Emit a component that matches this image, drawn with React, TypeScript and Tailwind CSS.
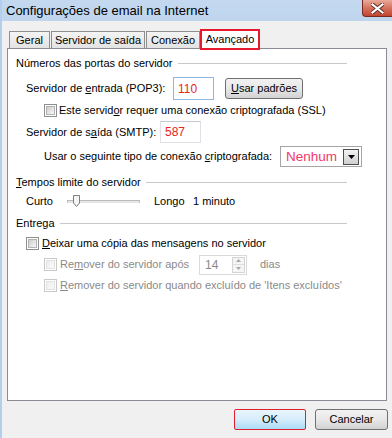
import React from "react";

function Check({ disabled }: { disabled?: boolean }) {
  return (
    <span
      className={`flex h-[13px] w-[13px] shrink-0 items-center justify-center border ${
        disabled ? "border-[#c9c9c9] bg-white" : "border-[#8e8f8f] bg-white"
      }`}
    >
      <span
        className={`h-[9px] w-[9px] border ${
          disabled
            ? "border-[#e2e2e2] bg-gradient-to-br from-[#ededed] to-[#fbfbfb]"
            : "border-[#b3b3b3] bg-gradient-to-br from-[#cdcdcd] to-[#f7f7f7]"
        }`}
      />
    </span>
  );
}

function Header({ children, top = 0 }: { children: React.ReactNode; top?: number }) {
  return (
    <div className={`flex items-center pr-[39px] ${top ? "h-[20px]" : "h-[28px]"}`}>
      <span>{children}</span>
      <span className="ml-[5px] h-px flex-1 bg-[#c6cacd]" />
    </div>
  );
}

function Tab({ label, w, selected }: { label: string; w: string; selected?: boolean }) {
  if (selected) {
    return (
      <div
        className={`relative z-10 -mb-[2px] flex h-[21px] ${w} items-center justify-center border-2 border-[#e8192c] bg-white`}
      >
        {label}
      </div>
    );
  }
  return (
    <div
      className={`flex h-[17px] ${w} items-center justify-center border border-b-0 border-[#8e8f8f] bg-gradient-to-b from-[#f4f4f4] to-[#e3e3e3] pt-[1px]`}
    >
      {label}
    </div>
  );
}

export default function App() {
  return (
    <div
      className="flex h-[438px] w-[392px] flex-col overflow-hidden border-l-2 border-[#b4cfee] bg-[#f0f0f0] text-[11px] text-black"
      style={{ fontFamily: '"Liberation Sans", Arial, sans-serif' }}
    >
      {/* title bar */}
      <div className="flex h-[21px] items-start justify-between bg-gradient-to-b from-[#c4d9f0] to-[#bed5ed]">
        <span className="pl-[4px] pt-[3px] text-[13px] leading-[15px] text-black">
          Configurações de email na Internet
        </span>
        <div className="flex h-[17px] w-[30px] items-center justify-center rounded-bl-[4px] border border-r-0 border-t-0 border-[#7a2a1e] bg-gradient-to-b from-[#e9a99a] via-[#d3725e] to-[#c0442c]">
          <svg width="13" height="11" viewBox="0 0 13 11">
            <path
              d="M1.5 1.5 L11.5 9.5 M11.5 1.5 L1.5 9.5"
              stroke="#5a2a22"
              strokeWidth="4"
              strokeLinecap="square"
            />
            <path
              d="M1.5 1.5 L11.5 9.5 M11.5 1.5 L1.5 9.5"
              stroke="#ffffff"
              strokeWidth="2.2"
              strokeLinecap="square"
            />
          </svg>
        </div>
      </div>

      {/* tabs */}
      <div className="flex h-[27px] items-end pl-[7px]">
        <Tab label="Geral" w="w-[41px]" />
        <div className="w-px" />
        <Tab label="Servidor de saída" w="w-[94px]" />
        <div className="w-px" />
        <Tab label="Conexão" w="w-[54px]" />
        <Tab label="Avançado" w="w-[60px]" selected />
      </div>

      {/* panel */}
      <div className="ml-[5px] flex h-[353px] w-[380px] flex-col border border-[#898c95] bg-white pl-[8px]">
        <Header>Números das portas do servidor</Header>

        <div className="flex h-[23px] items-center">
          <span className="ml-[10px] w-[147px]">
            Servidor de <u>e</u>ntrada (POP3):
          </span>
          <div className="flex h-[23px] w-[41px] items-center border border-[#8fb6e3] pl-[4px] text-[12px] text-[#e8241c]">
            110
          </div>
          <button className="ml-[11px] flex h-[21px] w-[78px] items-center justify-center rounded-[3px] border border-[#707070] bg-gradient-to-b from-[#f2f2f2] via-[#e8e8e8] to-[#d2d2d2]">
            <span>
              <u>U</u>sar padrões
            </span>
          </button>
        </div>

        <div className="flex h-[21px] items-center">
          <span className="ml-[28px]">
            <Check />
          </span>
          <span className="ml-[2px]">
            Este servid<u>o</u>r requer uma conexão criptografada (SSL)
          </span>
        </div>

        <div className="flex h-[22px] items-center">
          <span className="ml-[10px] w-[134px]">
            Servidor de s<u>a</u>ída (SMTP):
          </span>
          <div className="flex h-[22px] w-[41px] items-center border border-[#dfe1e6] border-t-[#c5c8ce] pl-[4px] text-[12px] text-[#e8241c]">
            587
          </div>
        </div>

        <div className="mt-[3px] flex h-[21px] items-center">
          <span className="ml-[28px] w-[236px]">
            Usar o seguinte tipo de conexão <u>c</u>riptografada:
          </span>
          <div className="flex h-[21px] w-[82px] items-center justify-between border border-[#a5a5a5] pl-[5px] pr-[2px]">
            <span className="text-[13.5px] leading-[16px] text-[#f2386a]">Nenhum</span>
            <span className="flex h-[16px] w-[16px] items-center justify-center border border-[#4d4d4d] bg-gradient-to-b from-[#f3f3f3] to-[#cfcfcf]">
              <svg width="7" height="4" viewBox="0 0 7 4">
                <path d="M0 0 H7 L3.5 4 Z" fill="#000" />
              </svg>
            </span>
          </div>
        </div>

        <div className="mt-[5px]">
          <Header top={1}>
            <u>T</u>empos limite do servidor
          </Header>
        </div>

        <div className="flex h-[18px] items-center">
          <span className="ml-[10px] w-[41px]">Curto</span>
          <div className="relative flex h-[12px] w-[73px] items-center">
            <div className="h-[3px] w-full border border-[#b9b9b9] border-b-[#e4e4e4] bg-[#e7e7e7]" />
            <svg className="absolute left-[6px] top-0" width="7" height="12" viewBox="0 0 7 12">
              <path d="M0.5 0.5 H6.5 V8 L3.5 11.5 L0.5 8 Z" fill="#f4f4f4" stroke="#7e7e7e" />
            </svg>
          </div>
          <span className="ml-[14px] w-[39px]">Longo</span>
          <span>1 minuto</span>
        </div>

        <div className="mt-[3px]">
          <Header top={1}>Entrega</Header>
        </div>

        <div className="flex h-[20px] items-center">
          <span className="ml-[10px]">
            <Check />
          </span>
          <span className="ml-[3px]">
            <u>D</u>eixar uma cópia das mensagens no servidor
          </span>
        </div>

        <div className="mt-[1px] flex h-[21px] items-center text-[#8a8a8a]">
          <span className="ml-[28px]">
            <Check disabled />
          </span>
          <span className="ml-[3px] w-[139px]">
            Re<u>m</u>over do servidor após
          </span>
          <div className="flex h-[20px] w-[48px] items-center justify-between border border-[#d9d9d9] pl-[5px] pr-[1px]">
            <span className="text-[12px] text-[#8a8a8a]">14</span>
            <div className="flex h-[16px] w-[13px] flex-col border border-[#d4d4d4]">
              <div className="flex flex-1 items-center justify-center border-b border-[#dedede] bg-[#f5f5f5]">
                <svg width="5" height="3" viewBox="0 0 5 3">
                  <path d="M0 3 L2.5 0 L5 3 Z" fill="#a8a8a8" />
                </svg>
              </div>
              <div className="flex flex-1 items-center justify-center bg-[#f5f5f5]">
                <svg width="5" height="3" viewBox="0 0 5 3">
                  <path d="M0 0 H5 L2.5 3 Z" fill="#a8a8a8" />
                </svg>
              </div>
            </div>
          </div>
          <span className="ml-[13px]">dias</span>
        </div>

        <div className="flex h-[21px] items-center text-[#8a8a8a]">
          <span className="ml-[28px]">
            <Check disabled />
          </span>
          <span className="ml-[3px]">
            <u>R</u>emover do servidor quando excluído de 'Itens excluídos'
          </span>
        </div>
      </div>

      {/* buttons */}
      <div className="mt-[8px] flex justify-end gap-[9px] pr-[4px]">
        <button className="flex h-[21px] w-[72px] items-center justify-center rounded-[2px] border border-[#e0202a] bg-gradient-to-b from-[#e8f5fd] via-[#d6eefc] to-[#a9daf6]">
          OK
        </button>
        <button className="flex h-[21px] w-[73px] items-center justify-center rounded-[3px] border border-[#707070] bg-gradient-to-b from-[#f2f2f2] via-[#e8e8e8] to-[#d2d2d2]">
          Cancelar
        </button>
      </div>
    </div>
  );
}
